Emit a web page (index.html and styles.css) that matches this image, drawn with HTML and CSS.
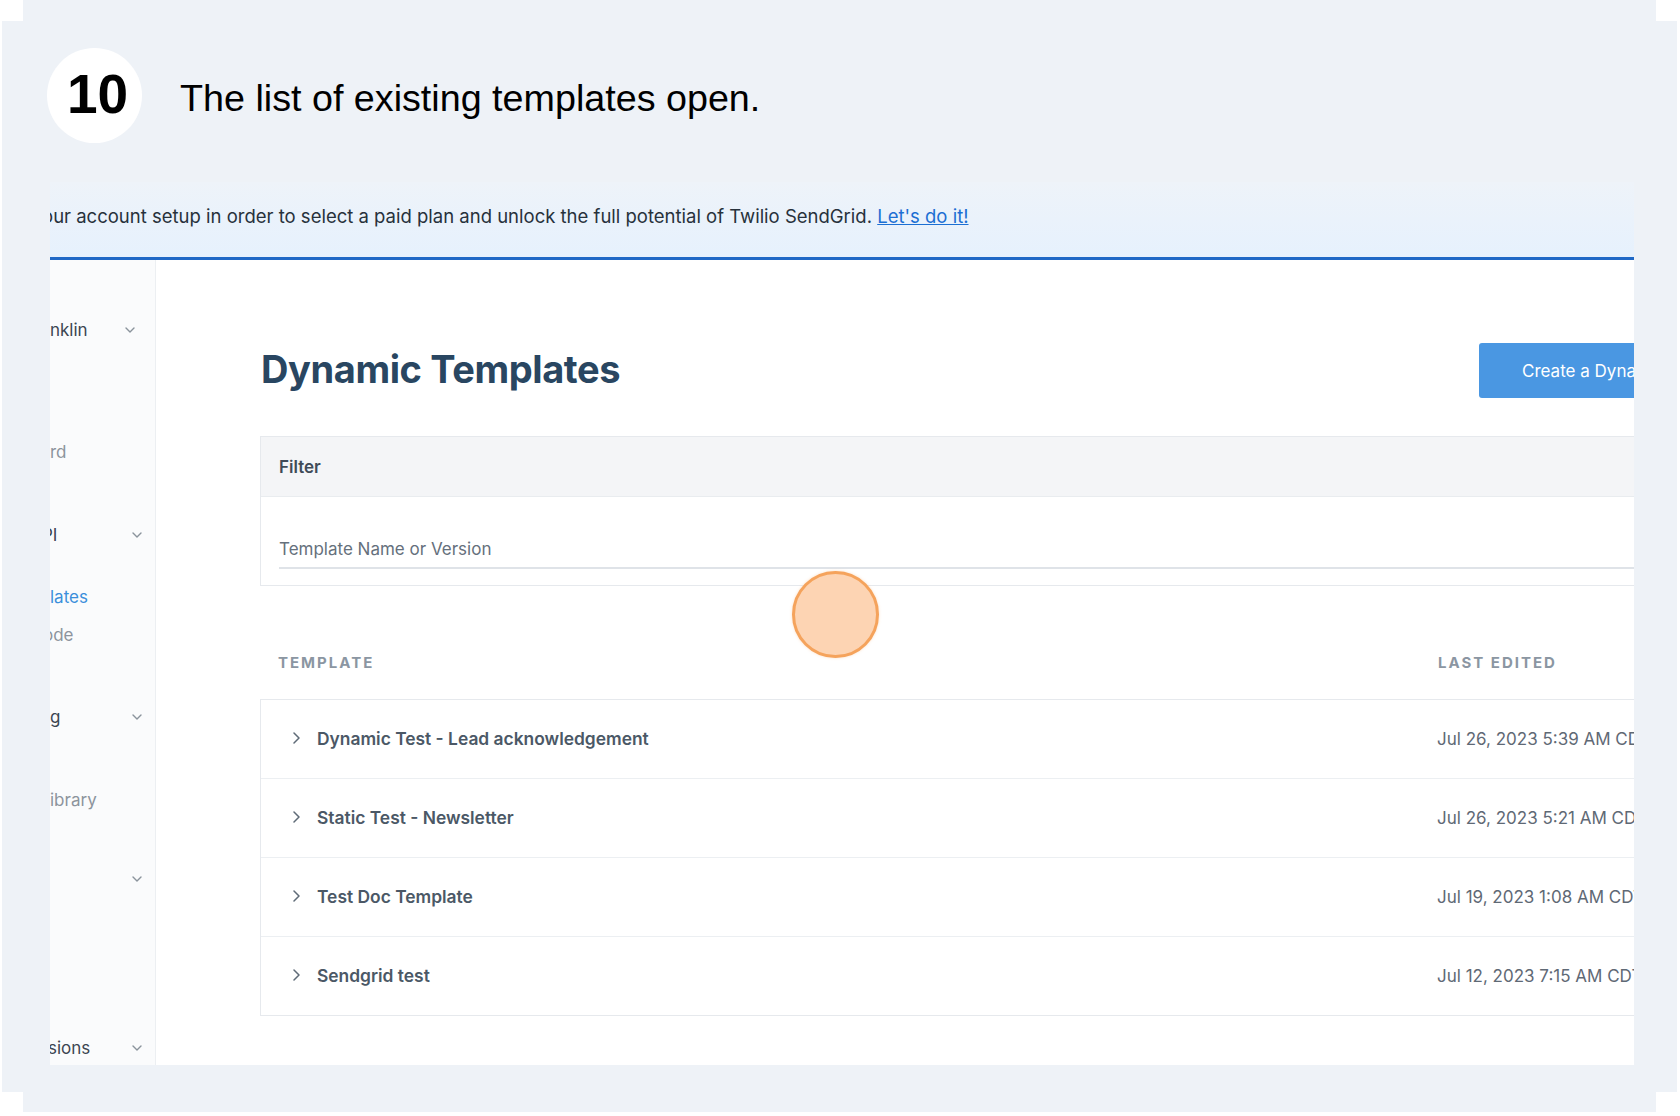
FILE: index.html
```html
<!DOCTYPE html>
<html lang="en">
<head>
<meta charset="utf-8">
<title>Dynamic Templates</title>
<link rel="stylesheet" href="styles.css">
</head>
<body>
<div class="frame">
  <header class="step">
    <div class="step-num">10</div>
    <h1 class="step-title">The list of existing templates open.</h1>
  </header>
  <div class="shot">
    <div class="banner">
      <p class="banner-text">your account setup in order to select a paid plan and unlock the full potential of Twilio SendGrid. <a class="banner-link" href="#">Let's do it!</a></p>
    </div>
    <div class="app">
      <nav class="sidebar">
        <div class="nav-item nav-head nav-account"><span class="nav-label">nklin</span><svg class="nav-chev nav-chev-account" width="10" height="6" viewBox="0 0 10 6"><path d="M1 1l4 4 4-4" /></svg></div>
        <div class="nav-item nav-dashboard"><span class="nav-label">rd</span></div>
        <div class="nav-item nav-head nav-api"><span class="nav-label nav-clip-api">PI</span><svg class="nav-chev" width="10" height="6" viewBox="0 0 10 6"><path d="M1 1l4 4 4-4" /></svg></div>
        <div class="nav-item nav-active nav-templates"><span class="nav-label">lates</span></div>
        <div class="nav-item nav-guide"><span class="nav-label nav-clip-guide">ode</span></div>
        <div class="nav-item nav-head nav-marketing"><span class="nav-label">g</span><svg class="nav-chev" width="10" height="6" viewBox="0 0 10 6"><path d="M1 1l4 4 4-4" /></svg></div>
        <div class="nav-item nav-library"><span class="nav-label">ibrary</span></div>
        <div class="nav-item nav-head nav-more"><span class="nav-label"></span><svg class="nav-chev" width="10" height="6" viewBox="0 0 10 6"><path d="M1 1l4 4 4-4" /></svg></div>
        <div class="nav-item nav-head nav-ext"><span class="nav-label nav-clip-ext">sions</span><svg class="nav-chev" width="10" height="6" viewBox="0 0 10 6"><path d="M1 1l4 4 4-4" /></svg></div>
      </nav>
      <main class="main">
        <div class="content">
          <div class="page-head">
            <h2 class="page-title">Dynamic Templates</h2>
            <button class="btn-create" type="button">Create a Dynamic Template</button>
          </div>
          <section class="filter">
            <div class="filter-head">Filter</div>
            <div class="filter-body">
              <input class="filter-input" type="text" placeholder="Template Name or Version">
            </div>
          </section>
          <div class="col-head">
            <span>TEMPLATE</span>
            <span>LAST EDITED</span>
          </div>
          <div class="tpl-list">
            <div class="tpl-row">
              <div class="tpl-name"><svg class="tpl-chev" width="7" height="12" viewBox="0 0 7 12"><path d="M1 1l5 5-5 5" /></svg>Dynamic Test - Lead acknowledgement</div>
              <div class="tpl-date">Jul 26, 2023 5:39 AM CDT</div>
            </div>
            <div class="tpl-row">
              <div class="tpl-name"><svg class="tpl-chev" width="7" height="12" viewBox="0 0 7 12"><path d="M1 1l5 5-5 5" /></svg>Static Test - Newsletter</div>
              <div class="tpl-date">Jul 26, 2023 5:21 AM CDT</div>
            </div>
            <div class="tpl-row">
              <div class="tpl-name"><svg class="tpl-chev" width="7" height="12" viewBox="0 0 7 12"><path d="M1 1l5 5-5 5" /></svg>Test Doc Template</div>
              <div class="tpl-date">Jul 19, 2023 1:08 AM CDT</div>
            </div>
            <div class="tpl-row">
              <div class="tpl-name"><svg class="tpl-chev" width="7" height="12" viewBox="0 0 7 12"><path d="M1 1l5 5-5 5" /></svg>Sendgrid test</div>
              <div class="tpl-date">Jul 12, 2023 7:15 AM CDT</div>
            </div>
          </div>
        </div>
      </main>
    </div>
  </div>
  <div class="click-marker"></div>
</div>
</body>
</html>
```
FILE: styles.css
```css
html {
  background: #ffffff;
}

body {
  margin: 0;
  padding: 0;
  font-family: Inter, "Noto Sans", sans-serif;
}

.frame {
  position: relative;
  z-index: 0;
  margin: 0 0 0 23px;
  width: 1633px;
  height: 1112px;
  background: #eef2f7;
}

.frame::before {
  content: "";
  position: absolute;
  left: -21px;
  top: 21px;
  width: 1675px;
  height: 1071px;
  background: #eef2f7;
  z-index: -1;
}

.step {
  display: flex;
  align-items: center;
  height: 95px;
  padding: 48px 0 0 24px;
}

.step-num {
  width: 95px;
  height: 95px;
  border-radius: 50%;
  background: #ffffff;
  display: flex;
  align-items: center;
  justify-content: center;
  box-sizing: border-box;
  padding: 0 0 4px 6px;
  font-family: "Liberation Sans", Arial, sans-serif;
  font-weight: 700;
  font-size: 55px;
  color: #000000;
}

.step-title {
  margin: 6px 0 0 38px;
  font-family: "Liberation Sans", Arial, sans-serif;
  font-weight: 400;
  font-size: 37.7px;
  color: #000000;
}

.shot {
  margin: 39px 0 0 27px;
  width: 1584px;
  height: 883px;
  overflow: hidden;
  display: flex;
  flex-direction: column;
}

.banner {
  flex: none;
  height: 75px;
  border-bottom: 3px solid #1f68c6;
  background: linear-gradient(#eef3f9, #e6f1fd);
  display: flex;
  align-items: center;
  overflow: hidden;
}

.banner-text {
  margin: 0 0 8px 0;
  white-space: nowrap;
  text-indent: -18px;
  font-size: 18.5px;
  color: #27313b;
}

.banner-link {
  color: #1c6fd3;
  text-decoration: underline;
}

.app {
  flex: 1;
  display: flex;
  min-height: 0;
}

.sidebar {
  flex: none;
  width: 106px;
  box-sizing: border-box;
  background: #fafbfc;
  border-right: 1px solid #eceff2;
  overflow: hidden;
  display: flex;
  flex-direction: column;
  padding-right: 13px;
}

.nav-item {
  display: flex;
  align-items: center;
  height: 24px;
  white-space: nowrap;
  font-size: 17px;
  color: #8c949d;
}

.nav-head {
  color: #3c4652;
}

.nav-active {
  color: #3b8fdb;
}

.nav-chev {
  margin-left: auto;
  flex: none;
}

.nav-chev path {
  fill: none;
  stroke: #8a939c;
  stroke-width: 1.4;
  stroke-linecap: round;
  stroke-linejoin: round;
}

.nav-chev-account {
  margin-right: 7px;
}

.nav-clip-api {
  margin-left: -8px;
}

.nav-clip-guide {
  margin-left: -7px;
}

.nav-clip-ext {
  margin-left: -2px;
}

.nav-account { margin-top: 58px; }
.nav-dashboard { margin-top: 98px; }
.nav-api { margin-top: 59px; }
.nav-templates { margin-top: 38px; }
.nav-guide { margin-top: 14px; }
.nav-marketing { margin-top: 58px; }
.nav-library { margin-top: 59px; }
.nav-more { margin-top: 55px; }
.nav-ext { margin-top: 145px; }

.main {
  flex: 1;
  background: #ffffff;
  overflow: hidden;
  padding: 83px 0 0 104px;
}

.content {
  width: 1500px;
}

.page-head {
  display: flex;
  align-items: center;
  height: 55px;
}

.page-title {
  margin: 0 0 4px 1px;
  font-size: 38px;
  font-weight: 700;
  letter-spacing: -0.4px;
  color: #294661;
}

.btn-create {
  margin-left: auto;
  width: 281px;
  height: 55px;
  border: 0;
  border-radius: 3px;
  background: #4a97e2;
  color: #ffffff;
  font-family: Inter, "Noto Sans", sans-serif;
  font-size: 17px;
  text-align: left;
  padding: 0 0 0 43px;
}

.filter {
  margin-top: 38px;
  border: 1px solid #e6e9ed;
}

.filter-head {
  height: 59px;
  background: #f4f5f7;
  border-bottom: 1px solid #e9ecef;
  padding-left: 18px;
  display: flex;
  align-items: center;
  font-size: 17px;
  font-weight: 600;
  color: #3f4b58;
}

.filter-body {
  padding: 34px 18px 16px 18px;
}

.filter-input {
  display: block;
  width: 100%;
  height: 36px;
  box-sizing: content-box;
  border: 0;
  border-bottom: 2px solid #dfe3e8;
  padding: 0;
  background: transparent;
  font-family: Inter, "Noto Sans", sans-serif;
  font-size: 17px;
  color: #5f6a76;
  outline: none;
}

.filter-input::placeholder {
  color: #65707c;
}

.col-head {
  display: grid;
  grid-template-columns: 1160px 1fr;
  align-items: center;
  height: 40px;
  margin-top: 56px;
  padding-left: 18px;
  font-size: 15px;
  font-weight: 700;
  letter-spacing: 2px;
  color: #8b96a2;
}

.tpl-list {
  margin-top: 17px;
  border: 1px solid #e6e9ed;
}

.tpl-row {
  display: grid;
  grid-template-columns: 1160px 1fr;
  align-items: center;
  height: 78px;
  padding-left: 18px;
  border-top: 1px solid #eceff2;
}

.tpl-row:first-child {
  border-top: 0;
}

.tpl-name {
  display: flex;
  align-items: center;
  padding-bottom: 2px;
  font-size: 17.4px;
  font-weight: 600;
  color: #4b5866;
}

.tpl-chev {
  flex: none;
  margin: 0 17px 0 14px;
}

.tpl-chev path {
  fill: none;
  stroke: #5f6b77;
  stroke-width: 1.5;
  stroke-linecap: round;
  stroke-linejoin: round;
}

.tpl-date {
  margin-left: -2px;
  white-space: nowrap;
  font-size: 17px;
  color: #5f6975;
}

.click-marker {
  position: absolute;
  left: 769px;
  top: 571px;
  width: 87px;
  height: 87px;
  box-sizing: border-box;
  border-radius: 50%;
  background: #fdd4b3;
  border: 3px solid #f5a35c;
  box-shadow: 0 0 3px rgba(245, 163, 92, 0.35);
}
```
